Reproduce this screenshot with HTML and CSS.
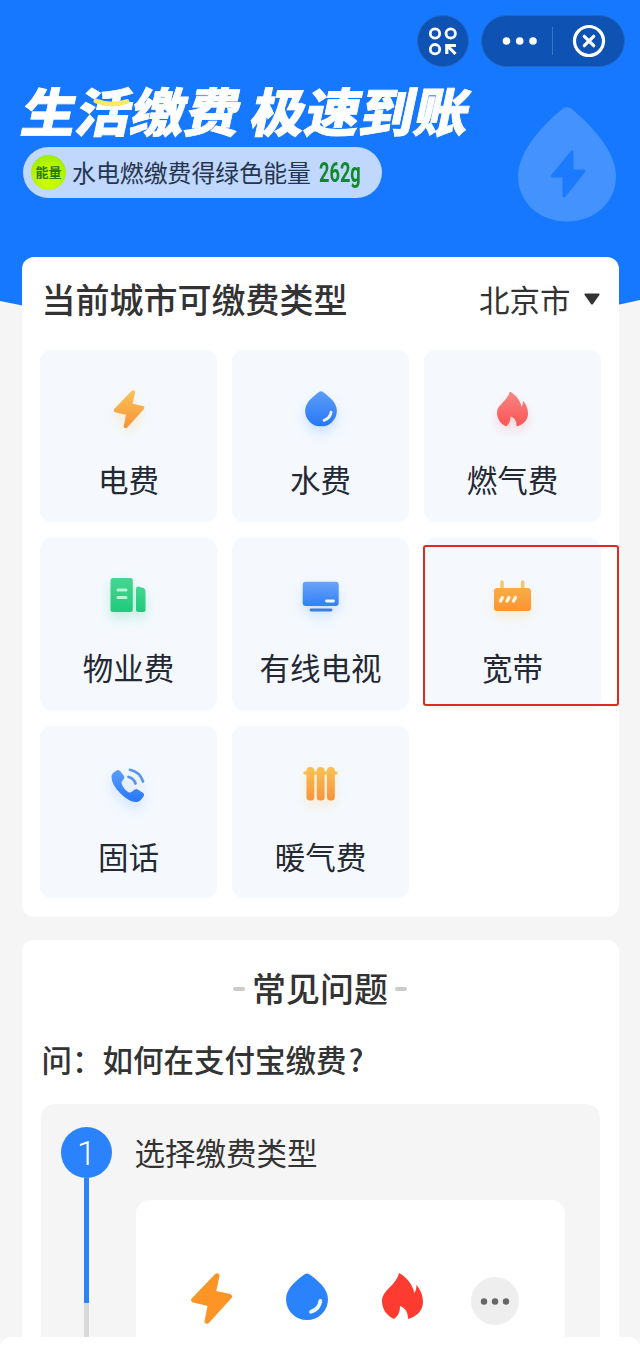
FILE: index.html
```html
<!DOCTYPE html>
<html lang="zh-CN">
<head>
<meta charset="utf-8">
<title>生活缴费</title>
<link rel="stylesheet" href="styles.css">
</head>
<body>
<svg class="defs" width="0" height="0" aria-hidden="true">
  <defs>
    <linearGradient id="orange" x1="0" y1="0" x2="0" y2="1"><stop offset="0" stop-color="#f9c255"/><stop offset="1" stop-color="#f8943a"/></linearGradient>
    <linearGradient id="router" x1="0" y1="0" x2="0" y2="1"><stop offset="0" stop-color="#f8ad46"/><stop offset="1" stop-color="#fc9430"/></linearGradient>
    <linearGradient id="blue" x1="0" y1="0" x2="0" y2="1"><stop offset="0" stop-color="#5e9df5"/><stop offset="1" stop-color="#2577fa"/></linearGradient>
    <linearGradient id="red" x1="0" y1="0" x2="0" y2="1"><stop offset="0" stop-color="#f98684"/><stop offset="1" stop-color="#f95553"/></linearGradient>
    <linearGradient id="green" x1="0" y1="0" x2="0" y2="1"><stop offset="0" stop-color="#48d592"/><stop offset="1" stop-color="#1dcb7c"/></linearGradient>
    <symbol id="bolt" viewBox="0 0 41 51"><path d="M26 2.7 L2.7 27 L19.5 31 L16 48.3 L38.5 23.5 L22.3 20 Z" stroke-width="5" stroke-linejoin="round"/></symbol>
    <symbol id="drop" viewBox="0 0 42 47"><path d="M18 1.7 Q21 -.8 24 1.7 C31 7 42 15 42 26.3 A21 20.7 0 0 1 0 26.3 C0 15 11 7 18 1.7Z"/><path d="M34.3 28 Q33.500 36 25 38.800" fill="none" stroke="#eef6ff" stroke-width="3.800" stroke-linecap="round"/></symbol>
    <symbol id="flame" viewBox="0 0 41 46"><path d="M17 0 C24 3.500 31 12 32.300 20 C34 18 34.500 15 34.300 12 C38 16 41 22 41 29 C41 38 34 44 26 46 C26 40 24 35 18 33 C18 39 16 43 12 46 C5 43 0 36 0 28 C0 17 14 13 17 0Z"/></symbol>
  </defs>
</svg>
<main class="page">
  <header class="hero">
    <nav class="toolbar">
      <span class="round-btn">
        <svg width="30" height="30" viewBox="0 0 30 30" fill="none" stroke="#fff" stroke-width="2.800"><circle cx="7" cy="7.500" r="4.700"/><circle cx="22.700" cy="7.500" r="4.700"/><circle cx="7" cy="23.200" r="4.700"/><path d="M18.800 28 V19.500 H28 M19.600 20 L27.500 28" stroke-width="3.200"/></svg>
      </span>
      <span class="capsule">
        <svg width="36" height="10" viewBox="0 0 36 10" fill="#fff"><circle cx="4.500" cy="5" r="3.800"/><circle cx="17.700" cy="5" r="3.800"/><circle cx="31" cy="5" r="3.800"/></svg>
        <i class="divider"></i>
        <svg width="34" height="34" viewBox="0 0 34 34" fill="none" stroke="#fff" stroke-width="3.200"><circle cx="17" cy="17" r="14.500"/><path d="M12.300 12.300 L21.700 21.700 M21.700 12.300 L12.300 21.700" stroke-linecap="round"/></svg>
      </span>
    </nav>
    <div class="banner">
      <div class="slogan">
        <h1 class="slogan-text"><span>生活缴费</span><span>极速到账</span></h1>
        <svg class="smile" width="40" height="12" viewBox="0 0 40 12"><path d="M4 3 Q20 9 35 3.500" fill="none" stroke="#fae967" stroke-width="4.800" stroke-linecap="round"/></svg>
        <p class="energy"><span class="ball">能量</span><span class="energy-text">水电燃缴费得绿色能量</span><b class="grams">262g</b></p>
      </div>
      <svg class="watermark" width="98" height="115" viewBox="0 0 98 115"><path d="M45 1.500 Q49 -1 53 1.500 C70 15 98 43 98 69 C98 96 76 114.500 49 114.500 C22 114.500 0 96 0 69 C0 43 28 15 45 1.500Z" fill="#4392fe"/><path d="M54 45 L34.500 69 H46 V89 L66 64 H54Z" fill="#1b7afe" stroke="#1b7afe" stroke-width="3" stroke-linejoin="round"/></svg>
    </div>
  </header>

  <section class="card types">
    <div class="types-head"><h2>当前城市可缴费类型</h2><span class="city">北京市<svg width="16" height="12" viewBox="0 0 16 12"><path d="M1 .5 H15 Q16 1 15.400 2 L9 11 Q8 12 7 11 L.6 2 Q0 1 1 .5Z" fill="#333"/></svg></span></div>
    <div class="grid">
      <div class="tile orange"><svg class="icon" viewBox="0 0 48 48"><use href="#bolt" x="8.500" y="5" width="31" height="38.500" fill="url(#orange)" stroke="url(#orange)"/></svg><span>电费</span></div>
      <div class="tile blue"><svg class="icon" viewBox="0 0 48 48"><use href="#drop" x="8" y="6" width="32" height="35.500" fill="url(#blue)"/></svg><span>水费</span></div>
      <div class="tile red"><svg class="icon" viewBox="0 0 48 48"><use href="#flame" x="8" y="6.500" width="31" height="35" fill="url(#red)"/></svg><span>燃气费</span></div>
      <div class="tile green"><svg class="icon" viewBox="0 0 48 48"><rect x="5.500" y="5" width="22.300" height="34" rx="2.500" fill="url(#green)"/><path d="M31 16 Q31 13 34 13.700 L38.500 15 Q40.500 16 40.500 18 V37 Q40.500 39 38.500 39 H33 Q31 39 31 37Z" fill="url(#green)"/><path d="M13 17 H21 M13 24.500 H21" stroke="#b6f8d8" stroke-width="3" stroke-linecap="round"/></svg><span>物业费</span></div>
      <div class="tile blue"><svg class="icon" viewBox="0 0 48 48"><rect x="5.700" y="8.700" width="36" height="24.300" rx="3" fill="url(#blue)" opacity=".92"/><path d="M14 37 H34" stroke="#3d7ed8" stroke-width="2.800" stroke-linecap="round"/><path d="M29.500 28 H36.500" stroke="#f0faff" stroke-width="2.800" stroke-linecap="round"/></svg><span>有线电视</span></div>
      <div class="tile orange"><svg class="icon" viewBox="0 0 48 48"><path d="M13 9 V16 M33.700 9 V16" stroke="#efc873" stroke-width="3.500" stroke-linecap="round"/><rect x="5" y="15" width="37" height="23" rx="3" fill="url(#router)"/><path d="M13.500 24.500 L11.500 28 M20 24.500 L18 28 M26.500 24.500 L24.500 28" stroke="#fff3d9" stroke-width="3.500" stroke-linecap="round"/></svg><span>宽带</span><i class="marker"></i></div>
      <div class="tile blue low"><svg class="icon" viewBox="0 0 48 48"><path d="M8 12 L11.500 9.500 Q14 8 15.500 10.500 L19 15 Q20 17 18 19 Q16 20.500 16.500 22.500 Q19 29 24 31.500 Q26 32 27.500 30 Q29.500 28 32 28 L37.500 31.500 Q40 33 38.500 35.500 Q35 41 31 41 Q24 41 15 32 Q6.500 23 6.500 16 Q6.500 13.500 8 12Z" fill="url(#blue)"/><path d="M25 8.800 Q35 11 38 20.500 M23.500 16 Q29 17.500 30.500 22.500" fill="none" stroke="#5793ea" stroke-width="2.700" stroke-linecap="round"/></svg><span>固话</span></div>
      <div class="tile orange low"><svg class="icon" viewBox="0 0 48 48"><path d="M8 12 H39" stroke="#f9c255" stroke-width="3.500" stroke-linecap="round"/><g fill="url(#orange)"><rect x="9.500" y="6" width="7.800" height="33.500" rx="3.500"/><rect x="19.800" y="6" width="7.800" height="33.500" rx="3.500"/><rect x="30" y="6" width="7.800" height="33.500" rx="3.500"/></g></svg><span>暖气费</span></div>
    </div>
  </section>

  <section class="card faq">
    <h2 class="faq-title"><i></i>常见问题<i></i></h2>
    <h3 class="question">问：如何在支付宝缴费<span>?</span></h3>
    <div class="steps">
      <div class="rail"><span class="num">1</span><i class="line"></i></div>
      <div class="step-body">
        <p class="step-name">选择缴费类型</p>
        <div class="demo">
          <svg width="41" height="51"><use href="#bolt" fill="#fd9426" stroke="#fd9426"/></svg>
          <svg width="42" height="47"><use href="#drop" fill="#2b83fc"/></svg>
          <svg width="41" height="46"><use href="#flame" fill="#fe3b30"/></svg>
          <svg class="more" width="48" height="48"><circle cx="24" cy="24" r="24" fill="#eee"/><g fill="#666"><circle cx="13" cy="24.500" r="3.200"/><circle cx="24" cy="24.500" r="3.200"/><circle cx="35" cy="24.500" r="3.200"/></g></svg>
        </div>
      </div>
    </div>
  </section>
  <footer class="sheet"></footer>
</main>
</body>
</html>
```
FILE: styles.css
```css
* { box-sizing: border-box; margin: 0; padding: 0; }
body { background: #f5f5f5; font-family: "Noto Sans CJK SC", sans-serif; color: #333; }
svg { display: block; flex: none; }
.defs { position: absolute; }
.page { width: 640px; height: 1348px; overflow: hidden; display: flex; flex-direction: column; }

.hero { flex: none; height: 312px; margin-bottom: -55px; padding-top: 15px; background: #1677ff; clip-path: polygon(0 0, 100% 0, 100% 300px, 590px 311px, 50px 311px, 0 301px); }
.toolbar { display: flex; justify-content: flex-end; gap: 12px; padding-right: 15px; height: 52px; }
.round-btn, .capsule { display: flex; align-items: center; background: #0e53b3; border: 1px solid #2266c2; border-radius: 26px; height: 52px; }
.round-btn { width: 52px; justify-content: center; }
.capsule { width: 144px; padding: 0 18px 0 20px; justify-content: space-between; }
.divider { width: 1px; height: 28px; background: #3975c6; margin-left: -5px; }
.banner { display: flex; justify-content: space-between; padding: 0 24px 0 23px; }
.slogan { position: relative; padding-top: 13px; }
.slogan-text { display: flex; gap: 11px; height: 67px; line-height: 59px; font-size: 54.500px; font-weight: 900; color: #fff; white-space: nowrap; transform: skewX(-12deg) scaleY(.96); transform-origin: 0 50%; -webkit-text-stroke: .8px #fff; }
.smile { position: absolute; left: 69px; top: 31px; }
.energy { width: 359px; height: 51px; border-radius: 26px; background: #c0d7fe; display: flex; align-items: center; padding-left: 8px; font-size: 23.900px; color: #26364e; white-space: nowrap; }
.energy-text { margin-top: -3px; }
.ball { width: 35px; height: 35px; margin-right: 6px; border-radius: 50%; text-align: center; font-size: 13px; line-height: 34px; font-weight: 700; color: #277a12; background: radial-gradient(circle at 50% 65%, #c8fa00 0 30%, #9fee09 75%, #8ae029); }
.grams { width: 40px; margin-left: 8px; font: bold 28px/1 Roboto, sans-serif; color: #108a28; transform: scaleX(.65); transform-origin: 0 50%; }
.watermark { margin-top: 40px; }

.card { position: relative; flex: none; width: 597px; margin: 0 auto; background: #fff; border-radius: 12px; }
.types { height: 660px; }
.types-head { height: 93px; padding: 0 19px 10px 20px; display: flex; justify-content: space-between; align-items: center; }
h2 { font-size: 34px; font-weight: 500; line-height: 50px; }
.city { display: flex; align-items: center; gap: 13px; font-size: 30.500px; }
.city svg { margin-top: 1px; }
.grid { display: grid; grid-template-columns: repeat(3, 177px); grid-auto-rows: 172px; gap: 16px 15px; justify-content: center; padding-left: 1px; }
.tile { position: relative; display: flex; flex-direction: column; align-items: center; padding-top: 35px; border-radius: 12px; background: #f5f9fe; box-shadow: 0 0 3px #f8fbff; font-size: 30.500px; line-height: 40px; color: #242833; }
.tile span { margin-top: 26px; }
.low span { margin-top: 27px; }
.icon { width: 48px; height: 48px; }
.orange .icon { filter: drop-shadow(0 6px 6px #f9c25540); }
.blue .icon { filter: drop-shadow(0 6px 6px #4a97ff40); }
.red .icon { filter: drop-shadow(0 6px 6px #f9555333); }
.green .icon { filter: drop-shadow(0 6px 6px #1dcb7c40); }
.marker { position: absolute; left: -1px; top: 7px; width: 196px; height: 161px; border: 2px solid #e2281f; border-radius: 3px; }

.faq { height: 397px; margin-top: 23px; padding: 23px 19px 0; border-radius: 12px 12px 0 0; display: flex; flex-direction: column; }
.faq-title { display: flex; justify-content: center; align-items: center; gap: 7px; }
.faq-title i { width: 12px; height: 4px; margin-top: 2px; border-radius: 2px; background: #ccc; }
.question { margin: 26px 0 0 1px; font-size: 30.500px; font-weight: 500; line-height: 40px; }
.question span { margin-left: 2px; }
.steps { flex: 1; margin-top: 25px; padding-left: 20px; border-radius: 14px 14px 0 0; background: #f5f5f5; display: flex; gap: 22px; }
.rail { width: 52px; padding-top: 23px; display: flex; flex-direction: column; align-items: center; }
.num { width: 51px; height: 51px; border-radius: 50%; background: #2a83fc; color: #fff; text-align: center; font: 300 34px/52px Roboto, sans-serif; }
.line { flex: 1; width: 5px; background: linear-gradient(#2a83fc 125px, #d9d9d9 125px); }
.step-name { height: 96px; padding-top: 28px; font-size: 30.500px; line-height: 40px; }
.demo { width: 429px; height: 137px; margin-left: 1px; padding: 73px 0 0 55px; background: #fff; border-radius: 14px 14px 0 0; display: flex; gap: 54px; align-items: flex-start; }
.more { margin: 4px 0 0 -6px; }
.sheet { flex: none; height: 11px; border-radius: 14px 14px 0 0; background: #fff; }
```
